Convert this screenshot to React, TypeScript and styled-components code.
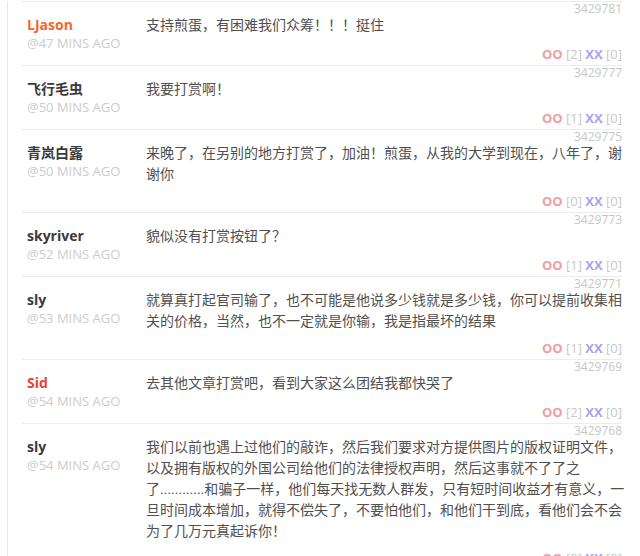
import React from "react";
import styled, { createGlobalStyle } from "styled-components";

const GlobalStyle = createGlobalStyle`
  html, body {
    margin: 0;
    padding: 0;
    background: #ffffff;
  }
  body {
    font-family: "Open Sans", "Noto Sans CJK SC", sans-serif;
  }
`;

const Page = styled.div`
  padding-left: 7px;
  padding-top: 1px;
  min-height: 100vh;
  box-sizing: border-box;
`;

const Panel = styled.div`
  border-left: 1px solid #e8e8e8;
  padding-left: 14px;
  min-height: 100vh;
  box-sizing: border-box;
`;

const List = styled.ol`
  list-style: none;
  margin: 0;
  padding: 0;
  width: 600px;
`;

const Row = styled.li`
  border-top: 1px solid #ececec;
  padding-bottom: 4px;
  display: flex;
  flex-direction: column;
`;

const PostId = styled.div`
  height: 13px;
  line-height: 13px;
  font-size: 12px;
  text-align: right;
  color: #c6c6c6;
`;

const Body = styled.div`
  display: flex;
  align-items: flex-start;
`;

const Author = styled.div`
  width: 124px;
  flex: none;
  padding-left: 5px;
  margin-bottom: -3px;
  box-sizing: border-box;
  display: flex;
  flex-direction: column;
`;

const Name = styled.strong<{ $tone?: "orange" | "red" }>`
  font-size: 14px;
  line-height: 20px;
  font-weight: 700;
  color: ${(p) =>
    p.$tone === "orange" ? "#f8652a" : p.$tone === "red" ? "#e8452e" : "#3a3a3a"};
`;

const Time = styled.span`
  margin-top: 2px;
  font-size: 13px;
  line-height: 13px;
  color: #cccccc;
  white-space: nowrap;
`;

const Comment = styled.p`
  flex: 1;
  margin: 0 -6px 9px 0;
  font-family: Roboto, "Noto Sans CJK SC", sans-serif;
  font-size: 14px;
  line-height: 21px;
  color: #505050;
`;

const Votes = styled.div`
  line-height: 14px;
  font-size: 13px;
  text-align: right;
  color: #c8c8c8;
  white-space: nowrap;
`;

const VoteMark = styled.span<{ $kind: "oo" | "xx" }>`
  font-weight: 700;
  color: ${(p) => (p.$kind === "oo" ? "#f29ca4" : "#a5a5ee")};
`;

type Item = {
  id: string;
  name: string;
  tone?: "orange" | "red";
  time: string;
  text: string;
  oo: number;
  xx: number;
};

const items: Item[] = [
  {
    id: "3429781",
    name: "LJason",
    tone: "orange",
    time: "@47 MINS AGO",
    text: "支持煎蛋，有困难我们众筹！！！挺住",
    oo: 2,
    xx: 0,
  },
  {
    id: "3429777",
    name: "飞行毛虫",
    time: "@50 MINS AGO",
    text: "我要打赏啊！",
    oo: 1,
    xx: 0,
  },
  {
    id: "3429775",
    name: "青岚白露",
    time: "@50 MINS AGO",
    text: "来晚了，在另别的地方打赏了，加油！煎蛋，从我的大学到现在，八年了，谢谢你",
    oo: 0,
    xx: 0,
  },
  {
    id: "3429773",
    name: "skyriver",
    time: "@52 MINS AGO",
    text: "貌似没有打赏按钮了？",
    oo: 1,
    xx: 0,
  },
  {
    id: "3429771",
    name: "sly",
    time: "@53 MINS AGO",
    text: "就算真打起官司输了，也不可能是他说多少钱就是多少钱，你可以提前收集相关的价格，当然，也不一定就是你输，我是指最坏的结果",
    oo: 1,
    xx: 0,
  },
  {
    id: "3429769",
    name: "Sid",
    tone: "red",
    time: "@54 MINS AGO",
    text: "去其他文章打赏吧，看到大家这么团结我都快哭了",
    oo: 2,
    xx: 0,
  },
  {
    id: "3429768",
    name: "sly",
    time: "@54 MINS AGO",
    text: "我们以前也遇上过他们的敲诈，然后我们要求对方提供图片的版权证明文件，以及拥有版权的外国公司给他们的法律授权声明，然后这事就不了了之了............和骗子一样，他们每天找无数人群发，只有短时间收益才有意义，一旦时间成本增加，就得不偿失了，不要怕他们，和他们干到底，看他们会不会为了几万元真起诉你！",
    oo: 0,
    xx: 0,
  },
];

export default function App() {
  return (
    <>
      <GlobalStyle />
      <Page>
        <Panel>
          <List>
            {items.map((it) => (
              <Row key={it.id}>
                <PostId>{it.id}</PostId>
                <Body>
                  <Author>
                    <Name $tone={it.tone}>{it.name}</Name>
                    <Time>{it.time}</Time>
                  </Author>
                  <Comment>{it.text}</Comment>
                </Body>
                <Votes>
                  <VoteMark $kind="oo">OO</VoteMark> [{it.oo}]{" "}
                  <VoteMark $kind="xx">XX</VoteMark> [{it.xx}]
                </Votes>
              </Row>
            ))}
          </List>
        </Panel>
      </Page>
    </>
  );
}
